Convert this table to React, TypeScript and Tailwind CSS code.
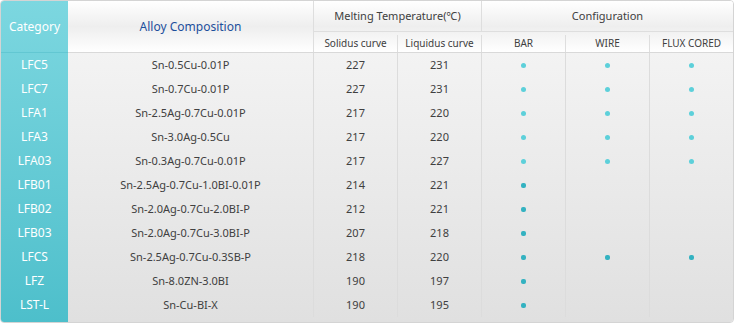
const rows: [string, string, string, string, number][] = [
  ["LFC5", "Sn-0.5Cu-0.01P", "227", "231", 3],
  ["LFC7", "Sn-0.7Cu-0.01P", "227", "231", 3],
  ["LFA1", "Sn-2.5Ag-0.7Cu-0.01P", "217", "220", 3],
  ["LFA3", "Sn-3.0Ag-0.5Cu", "217", "220", 3],
  ["LFA03", "Sn-0.3Ag-0.7Cu-0.01P", "217", "227", 3],
  ["LFB01", "Sn-2.5Ag-0.7Cu-1.0BI-0.01P", "214", "221", 1],
  ["LFB02", "Sn-2.0Ag-0.7Cu-2.0BI-P", "212", "221", 1],
  ["LFB03", "Sn-2.0Ag-0.7Cu-3.0BI-P", "207", "218", 1],
  ["LFCS", "Sn-2.5Ag-0.7Cu-0.3SB-P", "218", "220", 3],
  ["LFZ", "Sn-8.0ZN-3.0BI", "190", "197", 1],
  ["LST-L", "Sn-Cu-BI-X", "190", "195", 1],
];

const cols = "grid grid-cols-[246px_84px_84px_84px_84px_83px]";

function Dot({ dark }: { dark: boolean }) {
  return (
    <span
      className={
        dark
          ? "block h-[5px] w-[5px] rounded-[2px] bg-[#33b2c1]"
          : "block h-[5px] w-[5px] rounded-full bg-[#5dd0da]"
      }
    />
  );
}

export default function App() {
  return (
    <div
      className="h-[324px] w-[735px] bg-white text-[11px] text-[#404040]"
      style={{ fontFamily: '"Noto Sans", "Noto Sans CJK KR", sans-serif' }}
    >
      <div className="flex h-[323px] w-[734px] overflow-hidden rounded-[4px] border border-[#d4d4d4]">
        {/* category column */}
        <div className="flex w-[68px] flex-col bg-gradient-to-b from-[#7cd7e0] to-[#4dbfcb] text-[12px] text-white">
          <div className="flex h-[52px] items-center justify-center border-b border-[#62c7d2]">
            Category
          </div>
          {rows.map((r) => (
            <div key={r[0]} className="flex h-[24px] items-center justify-center">
              {r[0]}
            </div>
          ))}
        </div>

        <div className="flex flex-1 flex-col">
          {/* header */}
          <div className={`${cols} h-[52px] border-b border-[#d9d9d9] bg-gradient-to-b from-white via-[#eeeeee] to-white`}>
            <div className="row-span-2 flex items-center justify-center border-r border-[#dedede] text-[12px] text-[#1d4f9c]">
              Alloy Composition
            </div>
            <div className="col-span-2 flex h-[31px] items-center justify-center border-b border-r border-[#dedede]">
              Melting Temperature(℃)
            </div>
            <div className="col-span-3 flex h-[31px] items-center justify-center border-b border-[#dedede]">
              Configuration
            </div>
            <div className="flex items-center justify-center border-r border-[#dedede] text-[10px]">Solidus curve</div>
            <div className="flex items-center justify-center border-r border-[#dedede] text-[10px]">Liquidus curve</div>
            <div className="flex items-center justify-center border-r border-[#dedede] text-[10px]">BAR</div>
            <div className="flex items-center justify-center border-r border-[#dedede] text-[10px]">WIRE</div>
            <div className="flex items-center justify-center text-[10px]">FLUX CORED</div>
          </div>

          {/* body */}
          <div className="flex-1 bg-gradient-to-b from-[#f3f3f3] to-[#e0e0e0]">
            {rows.map((r, i) => (
              <div key={r[0]} className={`${cols} h-[24px]`}>
                <div className="flex items-center justify-center border-r border-[#dcdcdc]">{r[1]}</div>
                <div className="flex items-center justify-center border-r border-[#dcdcdc]">{r[2]}</div>
                <div className="flex items-center justify-center border-r border-[#dcdcdc]">{r[3]}</div>
                <div className="flex items-center justify-center border-r border-[#dcdcdc]">
                  <Dot dark={i > 4} />
                </div>
                <div className="flex items-center justify-center border-r border-[#dcdcdc]">
                  {r[4] > 1 && <Dot dark={i > 4} />}
                </div>
                <div className="flex items-center justify-center">
                  {r[4] > 1 && <Dot dark={i > 4} />}
                </div>
              </div>
            ))}
          </div>
        </div>
      </div>
    </div>
  );
}
